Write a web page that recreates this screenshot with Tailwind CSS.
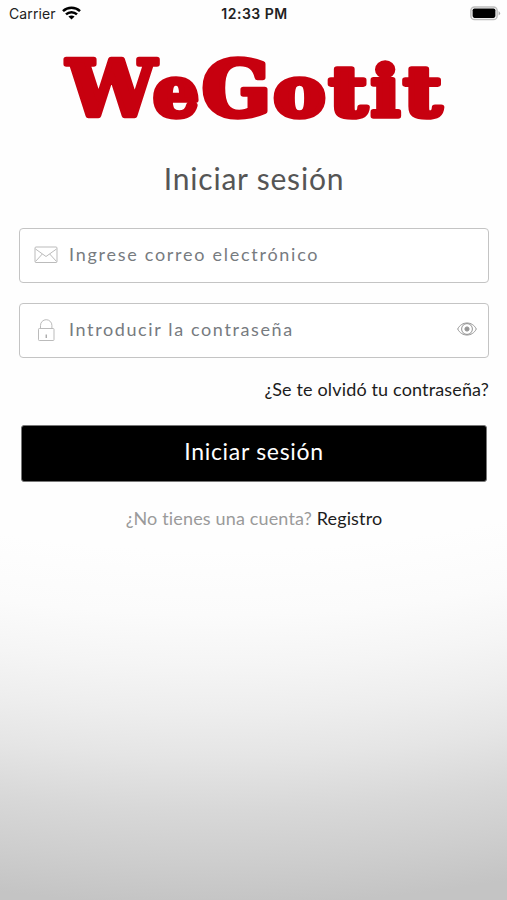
<!DOCTYPE html>
<html lang="es">

<head>
    <meta charset="UTF-8">
    <meta name="viewport" content="width=device-width, initial-scale=1.0">
    <title>WeGotit - Iniciar sesión</title>
    <script src="https://cdn.jsdelivr.net/npm/@tailwindcss/browser@4"></script>
</head>

<body class="bg-white">
    <div class="h-[900px] w-[507px] overflow-hidden font-['Lato',sans-serif] bg-[radial-gradient(circle_at_215px_-850px,#fefefe_1400px,#fbfbfb_1465px,#f5f5f5_1515px,#eeeeee_1560px,#e5e5e5_1607px,#d8d8d8_1660px,#cecece_1710px,#c4c4c4_1755px)]">
        <!-- Status bar -->
        <header class="grid h-7 grid-cols-3 items-center pl-[9px] pr-[7px] font-['Inter',sans-serif] text-[14px] text-[#222]">
            <div class="flex items-center gap-[6px] pb-px">
                <span class="tracking-[0.1px]">Carrier</span>
                <svg class="-mt-[2px] h-[14px] w-[19px]" viewBox="0 0 19 14" fill="none" stroke="#000" stroke-width="2.5">
                    <path d="M1 5.2C5.7.7 13.3.7 18 5.2" />
                    <path d="M4 8.4C7.1 5.4 11.9 5.4 15 8.4" />
                    <path d="M9.5 13.5 6.4 10.6C8.2 9 10.8 9 12.6 10.6Z" fill="#000" stroke="none" />
                </svg>
            </div>
            <span class="pb-px text-center font-semibold tracking-[0.5px] whitespace-nowrap">12:33 PM</span>
            <svg class="-mt-px -mr-px h-[15px] w-[31px] justify-self-end" viewBox="0 0 31 15">
                <rect x=".9" y=".9" width="26.2" height="12.6" rx="3.6" fill="#fff" stroke="#bdbdbd" stroke-width="1.5" />
                <rect x="2.6" y="2.5" width="22.8" height="9.4" rx="1.8" fill="#000" />
                <path d="M28.6 4.9q3 2.3 0 4.6Z" fill="#aaa" />
            </svg>
        </header>

        <main class="flex flex-col pl-[19px] pr-[18px]">
            <!-- Logo -->
            <svg class="h-[100px] w-[470px] overflow-visible" viewBox="19 28 470 100" font-family="'DejaVu Serif', serif" font-weight="700" fill="#c7000f" stroke="#c7000f" stroke-width="5.6" stroke-linejoin="round">
                <text y="116" font-size="77"><tspan x="67" textLength="89" lengthAdjust="spacingAndGlyphs">W</tspan><tspan x="153" font-size="70" textLength="46" lengthAdjust="spacingAndGlyphs">e</tspan><tspan x="202" textLength="69" lengthAdjust="spacingAndGlyphs">G</tspan><tspan x="273.5" font-size="70" textLength="52" lengthAdjust="spacingAndGlyphs">o</tspan><tspan x="329" font-size="70" textLength="38" lengthAdjust="spacingAndGlyphs">t</tspan><tspan x="371" font-size="70" textLength="29" lengthAdjust="spacingAndGlyphs">i</tspan><tspan x="403.5" font-size="70" textLength="38" lengthAdjust="spacingAndGlyphs">t</tspan></text>
            </svg>

            <h1 class="mt-8 h-9 text-center text-[30px] leading-9 tracking-[0.8px] text-[#555]">Iniciar sesión</h1>

            <form class="mt-8 flex flex-col">
                <!-- Email -->
                <label class="flex h-[55px] items-center rounded-[4px] border-[1.5px] border-[#c4c4c4] bg-white pb-px pl-[14px]">
                    <svg class="h-[18px] w-6" viewBox="0 0 24 18" fill="none" stroke="#bbb" stroke-width="1">
                        <rect x="1" y="1" width="22" height="15.5" rx="1" />
                        <path d="M1.5 3 12 10.5 22.5 3M1.5 15.5 8.3 8M22.5 15.5 15.7 8" />
                    </svg>
                    <span class="ml-[11px] pb-px text-[18px] tracking-[1.73px] text-[#777b7f]">Ingrese correo electrónico</span>
                </label>

                <!-- Password -->
                <label class="mt-5 flex h-[55px] items-center rounded-[4px] border-[1.5px] border-[#c4c4c4] bg-white pr-[11px] pb-[2px] pl-[14px]">
                    <svg class="h-6 w-6" viewBox="0 0 24 24" fill="none" stroke="#bbb" stroke-width="1">
                        <rect x="4.5" y="10.5" width="15.5" height="12" rx=".8" />
                        <path d="M6.5 10.5V7.4a5.7 5.7 0 0 1 11.4 0v3.1" />
                        <path d="M12.2 16.5v3.5" stroke="#888" />
                    </svg>
                    <span class="ml-[11px] flex-1 text-[18px] tracking-[1.62px] text-[#777b7f]">Introducir la contraseña</span>
                    <svg class="-mt-[2px] h-[14px] w-5" viewBox="0 0 20 14" fill="none" stroke="#949494" stroke-width="1">
                        <path d="M.7 7C4.5-1 15.5-1 19.3 7 15.5 15 4.5 15 .7 7Z" />
                        <circle cx="10" cy="7" r="5.4" />
                        <circle cx="10" cy="7" r="2.1" fill="#949494" />
                    </svg>
                </label>

                <a href="#" class="mt-[19px] self-end text-[18px] leading-6 tracking-[0.15px] whitespace-nowrap text-[#1c1c1c]">¿Se te olvidó tu contraseña?</a>

                <button type="button" class="mx-[2px] mt-6 h-[57px] rounded-[3px] border border-[#777] bg-black pb-1 text-[23px] tracking-[0.7px] text-white">Iniciar sesión</button>
            </form>

            <p class="mt-6 text-center text-[18px] leading-6 tracking-[0.15px] text-[#9a9a9a]">¿No tienes una cuenta? <a href="#" class="text-[#1c1c1c]">Registro</a></p>
        </main>
    </div>
</body>

</html>
